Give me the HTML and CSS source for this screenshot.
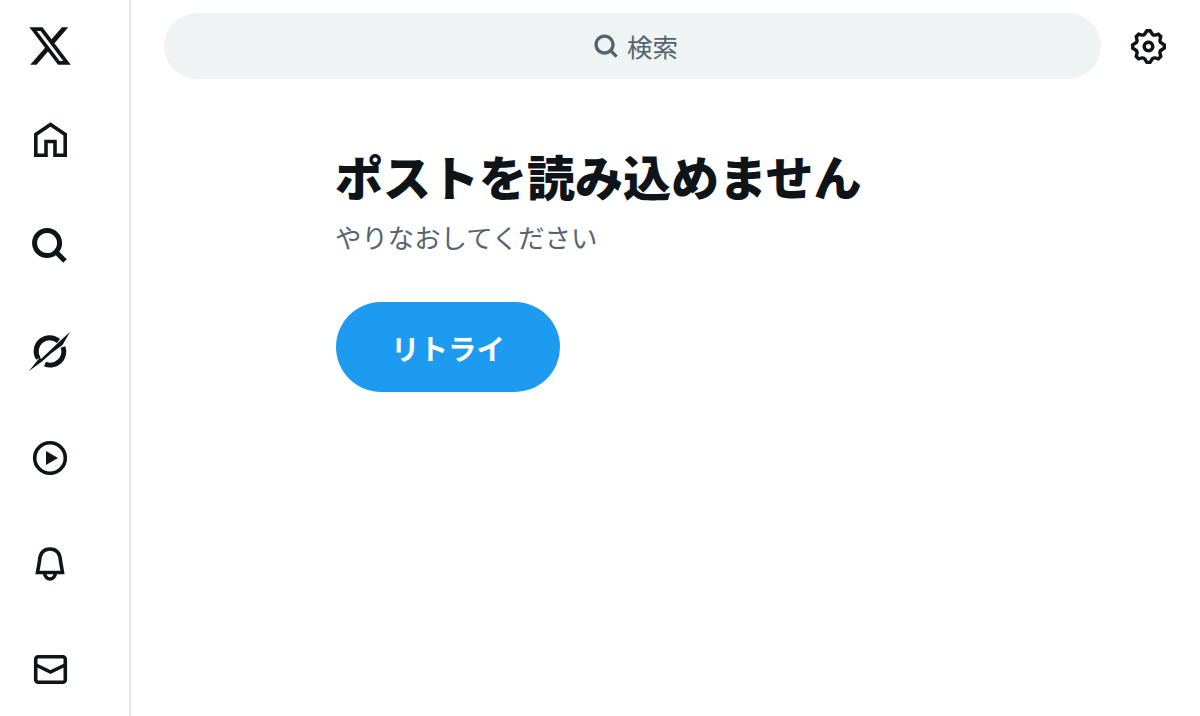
FILE: index.html
```html
<!DOCTYPE html>
<html lang="ja">
<head>
    <meta charset="UTF-8">
    <meta name="viewport" content="width=device-width, initial-scale=1.0">
    <title>X</title>
    <link rel="stylesheet" href="styles.css">
</head>
<body>

<aside class="sidebar">
    <a class="logo" href="#">
        <svg class="logo-icon" viewBox="0 0 24 24"><path d="M18.244 2.25h3.308l-7.227 8.26 8.502 11.24H16.17l-5.214-6.817L4.99 21.75H1.68l7.73-8.835L1.254 2.25H8.08l4.713 6.231zm-1.161 17.52h1.833L7.084 4.126H5.117z"/></svg>
    </a>
    <nav class="nav">
        <a class="nav-item" href="#">
            <svg class="nav-icon" viewBox="0 0 40 40"><path class="line" d="M5.8 35.2V14.500L20.500 4.500 35.200 14.500v20.700H25V21.500H16v13.700z"/></svg>
        </a>
        <a class="nav-item" href="#">
            <svg class="nav-icon" viewBox="0 0 24 24"><path d="M10.25 4.25c-3.314 0-6 2.686-6 6s2.686 6 6 6c1.657 0 3.155-.67 4.243-1.757 1.087-1.088 1.757-2.586 1.757-4.243 0-3.314-2.686-6-6-6zm-9 6c0-4.971 4.029-9 9-9s9 4.029 9 9c0 1.943-.617 3.744-1.664 5.215l4.475 4.474-2.122 2.122-4.474-4.475c-1.471 1.047-3.272 1.664-5.215 1.664-4.971-.001-9-4.03-9-9z"/></svg>
        </a>
        <a class="nav-item" href="#">
            <svg class="nav-icon" viewBox="0 0 40 40"><path class="line thick" d="M8.300 26.500A13.500 13.500 0 0 1 28.500 9"/><path class="line thick" d="M33 15A13.500 13.500 0 0 1 15 32"/><path d="M-1 39L9 26.500 6.500 20 11 27 30 9 40 0 32.500 13 21 21.500 12 29.500z"/></svg>
        </a>
        <a class="nav-item" href="#">
            <svg class="nav-icon" viewBox="0 0 40 40"><circle class="line" cx="20" cy="20" r="15.300"/><path d="M16 13l12 7-12 7z"/></svg>
        </a>
        <a class="nav-item" href="#">
            <svg class="nav-icon" viewBox="0 0 40 40"><path class="line" d="M7.500 28.500L9.500 17C10 9 14 5 20 5s10 4 10.500 12L32.500 28.500z"/><path class="line" d="M14.500 29c.5 4 3 6 5.500 6s5-2 5.500-6"/></svg>
        </a>
        <a class="nav-item" href="#">
            <svg class="nav-icon" viewBox="0 0 40 40"><rect class="line" x="5.700" y="6.700" width="29.600" height="25.600" rx="2.500"/><path class="line" d="M6 15l14.500 7L35 15"/></svg>
        </a>
    </nav>
</aside>

<main class="main">
    <div class="topbar">
        <div class="search">
            <svg class="search-icon" viewBox="0 0 24 24"><path d="M10.25 4.25c-3.314 0-6 2.686-6 6s2.686 6 6 6c1.657 0 3.155-.67 4.243-1.757 1.087-1.088 1.757-2.586 1.757-4.243 0-3.314-2.686-6-6-6zm-9 6c0-4.971 4.029-9 9-9s9 4.029 9 9c0 1.943-.617 3.744-1.664 5.215l4.475 4.474-2.122 2.122-4.474-4.475c-1.471 1.047-3.272 1.664-5.215 1.664-4.971-.001-9-4.03-9-9z"/></svg>
            <span class="search-label">検索</span>
        </div>
        <a class="settings" href="#">
            <svg class="settings-icon" viewBox="0 0 24 24"><path d="M10.54 1.75h2.92l1.57 2.36c.11.17.32.25.53.21l2.53-.59 2.17 2.17-.58 2.54c-.05.2.04.41.21.53l2.36 1.57v2.92l-2.36 1.57c-.17.12-.26.33-.21.53l.58 2.54-2.17 2.17-2.53-.59c-.21-.04-.42.04-.53.21l-1.57 2.36h-2.92l-1.58-2.36c-.11-.17-.32-.25-.52-.21l-2.54.59-2.17-2.17.58-2.54c.05-.2-.03-.41-.21-.53l-2.35-1.57v-2.92L4.1 8.97c.18-.12.26-.33.21-.53L3.73 5.9 5.9 3.73l2.54.59c.2.04.41-.04.52-.21l1.58-2.36zm1.07 2l-.98 1.47C10.05 6.08 9 6.5 7.99 6.27l-1.46-.34-.6.6.33 1.47c.24 1.01-.18 2.07-1.05 2.64l-1.46.98v.78l1.46.98c.87.57 1.29 1.63 1.05 2.64l-.33 1.47.6.6 1.46-.34c1.01-.23 2.06.19 2.64 1.05l.98 1.47h.78l.97-1.47c.58-.86 1.63-1.28 2.65-1.05l1.45.34.61-.6-.34-1.47c-.23-1.01.18-2.07 1.05-2.64l1.47-.98v-.78l-1.47-.98c-.87-.57-1.28-1.63-1.05-2.64l.34-1.47-.61-.6-1.45.34c-1.02.23-2.07-.19-2.65-1.05l-.97-1.47h-.78zM12 10.5c-.83 0-1.5.67-1.5 1.5s.67 1.5 1.5 1.5c.82 0 1.5-.67 1.5-1.5s-.68-1.5-1.5-1.5zM8.5 12c0-1.93 1.57-3.5 3.5-3.5 1.92 0 3.5 1.57 3.5 3.5s-1.58 3.5-3.5 3.5c-1.93 0-3.5-1.57-3.5-3.5z"/></svg>
        </a>
    </div>

    <section class="error">
        <h1 class="error-title">ポストを読み込めません</h1>
        <p class="error-text">やりなおしてください</p>
        <button class="retry" type="button">リトライ</button>
    </section>
</main>

</body>
</html>
```

FILE: styles.css
```css
html, body {
    height: 100%;
}

body {
    margin: 0;
    display: flex;
    overflow: hidden;
    background: #ffffff;
    color: #0f1419;
    font-family: "Noto Sans CJK JP", "Noto Sans", sans-serif;
}

svg {
    display: block;
    fill: #0f1419;
}

.sidebar {
    width: 100px;
    flex: none;
    display: flex;
    flex-direction: column;
    align-items: center;
    padding: 23px 29px 0 0;
    border-right: 2px solid #e6e9eb;
}

.logo {
    margin-bottom: 51px;
}

.logo-icon {
    width: 46px;
    height: 46px;
}

.nav {
    display: flex;
    flex-direction: column;
    gap: 66px;
}

.nav-icon {
    width: 40px;
    height: 40px;
    overflow: visible;
}

.nav-icon .line {
    fill: none;
    stroke: #0f1419;
    stroke-width: 3.6;
}

.nav-icon .thick {
    stroke-width: 5;
}

.main {
    flex: 1;
    min-width: 0;
}

.topbar {
    display: flex;
    align-items: center;
    padding: 13px 31px 0 33px;
}

.search {
    flex: 1;
    height: 66px;
    display: flex;
    align-items: center;
    justify-content: center;
    gap: 7px;
    padding-left: 6px;
    border-radius: 33px;
    background: #eff3f4;
    color: #536471;
    font-size: 25.5px;
}

.search-label {
    padding-bottom: 2px;
}

.search-icon {
    width: 27px;
    height: 27px;
    fill: #536471;
}

.settings {
    margin-left: 27px;
}

.settings-icon {
    width: 41px;
    height: 41px;
}

.error {
    padding: 68px 0 0 204px;
}

.error-title {
    margin: 0;
    font-size: 48px;
    line-height: 56px;
    font-weight: 900;
}

.error-text {
    margin: 15px 0 0;
    color: #536471;
    font-size: 26.4px;
    line-height: 38px;
}

.retry {
    display: block;
    width: 224px;
    height: 90px;
    margin: 46px 0 0 1px;
    border: none;
    border-radius: 45px;
    background: #1d9bf0;
    color: #ffffff;
    font-family: inherit;
    font-size: 28.5px;
    font-weight: 700;
}
```
